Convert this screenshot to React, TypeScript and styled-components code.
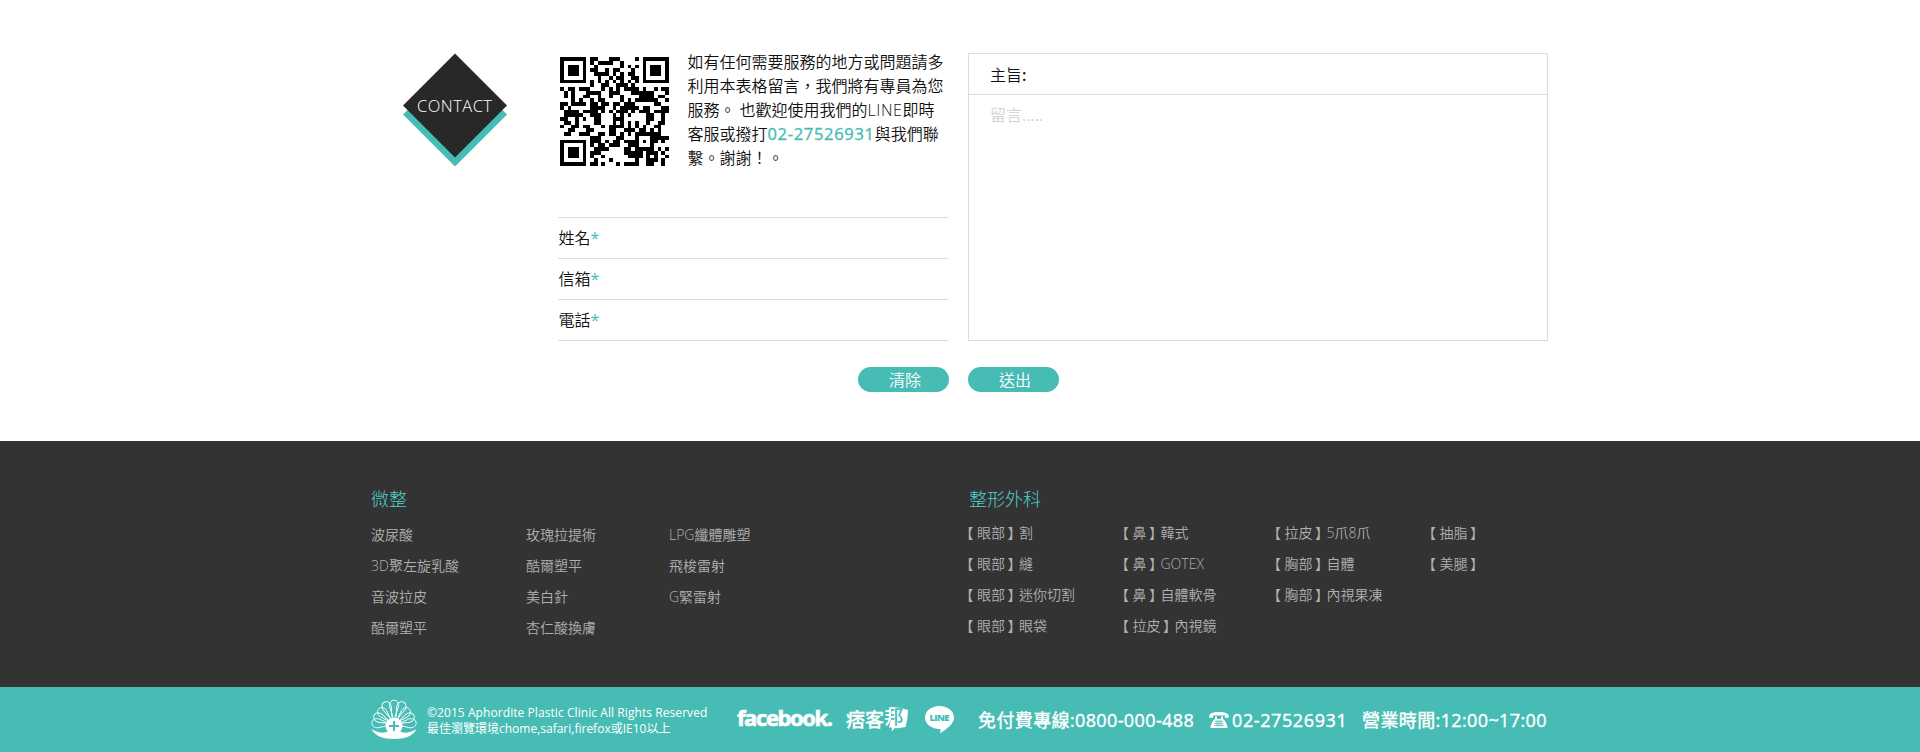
import React from "react";
import styled, { createGlobalStyle } from "styled-components";

const TEAL = "#47bcb5";
const DARK = "#333333";
const INK = "#101010";
const LINE = "#dcdcdc";

const GlobalStyle = createGlobalStyle`
  * { box-sizing: border-box; }
  body {
    margin: 0;
    background: #fff;
    color: ${INK};
    font-family: "Open Sans", "Noto Sans CJK TC", sans-serif;
    font-weight: 350;
  }
  ul { list-style: none; margin: 0; padding: 0; }
  h3, p { margin: 0; }
`;

/* ---------- QR code (version 3, level M, mask 3) ---------- */

const SIZE = 29;
const DATA_WORDS = 44;
const ECC_WORDS = 26;
const EXP: number[] = new Array(256).fill(0);
const LOG: number[] = new Array(256).fill(0);
for (let i = 0, v = 1; i < 255; i++) {
  EXP[i] = v;
  LOG[v] = i;
  v <<= 1;
  if (v & 256) v ^= 0x11d;
}
const mul = (a: number, b: number) => (a && b ? EXP[(LOG[a] + LOG[b]) % 255] : 0);

function eccWords(data: number[]): number[] {
  let gen = [1];
  for (let i = 0; i < ECC_WORDS; i++) {
    const next = new Array(gen.length + 1).fill(0);
    gen.forEach((c, k) => {
      next[k] ^= c;
      next[k + 1] ^= mul(c, EXP[i]);
    });
    gen = next;
  }
  const rest = [...data, ...new Array(ECC_WORDS).fill(0)];
  for (let i = 0; i < data.length; i++) {
    const f = rest[i];
    if (f) gen.forEach((c, k) => { rest[i + k] ^= mul(c, f); });
  }
  return rest.slice(data.length);
}

function qrMatrix(text: string): number[][] {
  const byte = (n: number) => n.toString(2).padStart(8, "0");
  let bits = "0100" + byte(text.length);
  for (const c of text) bits += byte(c.charCodeAt(0));
  bits += "0000";
  const data: number[] = [];
  for (let i = 0; i < bits.length; i += 8) data.push(parseInt(bits.slice(i, i + 8), 2));
  for (let p = 0; data.length < DATA_WORDS; p++) data.push(p % 2 ? 0x11 : 0xec);
  const stream = [...data, ...eccWords(data)].map(byte).join("");

  const m: number[][] = Array.from({ length: SIZE }, () => new Array(SIZE).fill(-1));
  const finder = (r: number, c: number) => {
    for (let i = -1; i < 8; i++)
      for (let j = -1; j < 8; j++) {
        const y = r + i;
        const x = c + j;
        if (y < 0 || x < 0 || y >= SIZE || x >= SIZE) continue;
        const q = Math.max(Math.abs(i - 3), Math.abs(j - 3));
        m[y][x] = q === 3 || q < 2 ? 1 : 0;
      }
  };
  finder(0, 0);
  finder(0, 22);
  finder(22, 0);
  for (let i = -2; i < 3; i++)
    for (let j = -2; j < 3; j++) m[22 + i][22 + j] = Math.max(Math.abs(i), Math.abs(j)) === 1 ? 0 : 1;
  for (let i = 8; i < 21; i++) m[6][i] = m[i][6] = (i + 1) % 2;

  const format = 0b101101101001011;
  const bit = (i: number) => (format >> i) & 1;
  for (let i = 0; i < 6; i++) m[i][8] = bit(i);
  m[7][8] = bit(6);
  m[8][8] = bit(7);
  m[8][7] = bit(8);
  for (let i = 9; i < 15; i++) m[8][14 - i] = bit(i);
  for (let i = 0; i < 8; i++) m[8][28 - i] = bit(i);
  for (let i = 8; i < 15; i++) m[14 + i][8] = bit(i);
  m[21][8] = 1;

  let k = 0;
  for (let right = 28; right >= 1; right -= 2) {
    if (right === 6) right = 5;
    const up = ((right + 1) & 2) === 0;
    for (let t = 0; t < SIZE; t++)
      for (let j = 0; j < 2; j++) {
        const x = right - j;
        const y = up ? 28 - t : t;
        if (m[y][x] !== -1) continue;
        const raw = k < stream.length ? +stream[k] : 0;
        k++;
        m[y][x] = (x + y) % 3 === 0 ? raw ^ 1 : raw;
      }
  }
  return m;
}

const QrSvg = styled.svg`
  display: block;
  width: 109px;
  height: 109px;
  margin: 4px 0 0 2px;
`;

function QrCode({ text }: { text: string }) {
  const d = qrMatrix(text)
    .flatMap((row, y) => row.map((on, x) => (on ? `M${x} ${y}h1v1h-1z` : "")))
    .join("");
  return (
    <QrSvg viewBox="0 0 29 29" shapeRendering="crispEdges">
      <path d={d} fill="#000" />
    </QrSvg>
  );
}

/* ---------- Contact form ---------- */

const Contact = styled.section`
  height: 441px;
  padding: 53px 372px 0 403px;
`;
const Columns = styled.div`
  display: flex;
  height: 288px;
`;
const Badge = styled.div`
  width: 155px;
  svg { display: block; }
`;
const Left = styled.div`
  width: 390px;
  display: flex;
  flex-direction: column;
  justify-content: space-between;
`;
const Intro = styled.div`
  display: flex;
  gap: 18.4px;
`;
const IntroText = styled.p`
  width: 260px;
  margin-top: -3px;
  font-size: 16px;
  line-height: 24px;
  white-space: nowrap;
`;
const Phone = styled.b`
  color: ${TEAL};
  font-weight: 400;
  font-size: 16.5px;
  letter-spacing: 0.7px;
  -webkit-text-stroke: 0.35px ${TEAL};
`;
const Latin = styled.span`
  letter-spacing: 0.55px;
`;
const Mark = styled.span`
  font-weight: 400;
`;
const Fields = styled.div`
  border-top: 1px solid ${LINE};
`;
const Field = styled.div`
  height: 41px;
  padding-left: 0.5px;
  border-bottom: 1px solid ${LINE};
  font-size: 16px;
  line-height: 40px;
  ${Mark} { color: ${TEAL}; }
`;
const Message = styled.div`
  width: 580px;
  margin-left: 20px;
  border: 1px solid ${LINE};
`;
const Subject = styled.div`
  height: 41px;
  padding-left: 21px;
  border-bottom: 1px solid ${LINE};
  font-size: 16px;
  line-height: 42px;
  ${Mark} { font-weight: 600; }
`;
const Placeholder = styled.div`
  padding-left: 21px;
  font-size: 16px;
  line-height: 40px;
  color: #d4d4d4;
`;
const Buttons = styled.div`
  display: flex;
  gap: 19px;
  margin: 26px 0 0 455px;
`;
const Button = styled.button`
  width: 91px;
  height: 25px;
  padding: 0 0 0 3px;
  border: 0;
  border-radius: 13px;
  background: ${TEAL};
  color: #fff;
  font: inherit;
  font-size: 16px;
  line-height: 24px;
`;

/* ---------- Links ---------- */

const Links = styled.section`
  display: flex;
  height: 246px;
  padding: 46px 0 0 371px;
  background: ${DARK};
  color: #b0b0b0;
`;
const Group = styled.div<{ $width: number }>`
  width: ${(p) => p.$width}px;
`;
const Heading = styled.h3<{ $indent?: number }>`
  margin-left: ${(p) => p.$indent ?? 0}px;
  height: 25px;
  font-size: 18px;
  font-weight: 300;
  line-height: 25px;
  color: #4fd0c8;
`;
const Lists = styled.div<{ $top: number }>`
  display: flex;
  margin-top: ${(p) => p.$top}px;
`;
const List = styled.ul<{ $width: number }>`
  width: ${(p) => p.$width}px;
  li {
    height: 31px;
    font-size: 14px;
    line-height: 31px;
    white-space: nowrap;
  }
`;
const Bracket = styled.span<{ $shift: number }>`
  margin: 0 ${(p) => -p.$shift}px 0 ${(p) => p.$shift}px;
`;

/* ---------- Bottom bar ---------- */

const Bar = styled.footer`
  display: flex;
  align-items: center;
  height: 65px;
  padding-left: 371px;
  background: ${TEAL};
  color: #fff;
  svg { display: block; flex: none; overflow: visible; }
`;
const Copyright = styled.div`
  width: 310px;
  margin-left: 10px;
  padding-top: 2px;
  font-size: 12px;
  font-weight: 400;
  line-height: 16px;
  white-space: nowrap;
`;
const Stretch = styled.span`
  letter-spacing: 0.07px;
`;
const Fb = styled.div`
  width: 109px;
  font: 700 22px/26px "Open Sans", sans-serif;
  letter-spacing: -1.4px;
  -webkit-text-stroke: 0.6px #fff;
  padding-bottom: 5px;
`;
const Pixnet = styled.div`
  display: flex;
  align-items: center;
  width: 79px;
  font-size: 19px;
  font-weight: 500;
  line-height: 22px;
  -webkit-text-stroke: 0.3px #fff;
  svg { -webkit-text-stroke: 0; }
`;
const Info = styled.div<{ $width: number; $space: number }>`
  width: ${(p) => p.$width}px;
  font-size: 18px;
  font-weight: 400;
  letter-spacing: ${(p) => p.$space}px;
  line-height: 24px;
  white-space: nowrap;
  -webkit-text-stroke: 0.4px #fff;
`;

function Shell() {
  const petals = [-84, -64, -43, -22, 0, 22, 43, 64, 84];
  return (
    <svg width="46" height="42" viewBox="0 0 46 42">
      <g fill="none" stroke="#fff" strokeWidth="0.9">
        {petals.map((a) => (
          <path
            key={a}
            transform={`rotate(${a} 23 26) translate(0 ${Math.abs(a) > 30 ? 2.6 : 0})`}
            d="M22 18 L18.6 8 C17.8 4 20 1.2 23 1.2 S28.2 4 27.4 8 L24 18"
          />
        ))}
      </g>
      <path d="M0.5 30 C7 34 13 34.500 17 32.500 H29 C33 34.500 39 34 45.500 30 C42 37 34 40 23 40 S4 37 0.500 30z" fill="#fff" />
      <circle cx="23" cy="27" r="8.500" fill="#fff" />
      <path d="M23 22v10M18 27h10" stroke={TEAL} strokeWidth="2" />
    </svg>
  );
}

function PixnetMark() {
  const glyph = { x: 0, y: 18, fontFamily: "Noto Sans CJK TC", fontSize: 19.5, fontWeight: 500 };
  const bubble = "M7 1 Q16 1 24 4 Q24 13 21.500 21 Q15 22.500 11 22 L7.500 25.500 8 21.500 5 21.500 Q8 12 7 1z";
  return (
    <svg width="26" height="33" viewBox="0 -3 26 33">
      <linearGradient id="split" gradientUnits="userSpaceOnUse" x1="0" y1="0" x2="26" y2="0">
        <stop offset="0.27" stopColor="#fff" />
        <stop offset="0.27" stopColor={TEAL} />
      </linearGradient>
      <path d={bubble} fill="#fff" />
      <text {...glyph} fill="url(#split)">邦</text>
    </svg>
  );
}

function Tagged({ tag, children }: { tag: string; children?: React.ReactNode }) {
  return (
    <li>
      <Bracket $shift={-3.5}>【</Bracket>
      {tag}
      <Bracket $shift={2.5}>】</Bracket>
      {children}
    </li>
  );
}

export default function App() {
  return (
    <>
      <GlobalStyle />
      <Contact>
        <Columns>
          <Badge>
            <svg width="104" height="114" viewBox="0 0 104 114">
              <path d="M0 61.5 52 9.5 104 61.5 52 113.5z" fill={TEAL} />
              <path d="M0 52.5 52 0.5 104 52.5 52 104.5z" fill="#282828" />
              <text
                x="51.500"
                y="59"
                fill="#fff"
                textAnchor="middle"
                textLength="75"
                fontFamily="Open Sans"
                fontWeight="300"
                fontSize="16.5"
              >
                CONTACT
              </text>
            </svg>
          </Badge>
          <Left>
            <Intro>
              <QrCode text="http://line.me/ti/p/woSXs21U5K" />
              <IntroText>
                如有任何需要服務的地方或問題請多
                <br />
                利用本表格留言，我們將有專員為您
                <br />
                服務。 也歡迎使用我們的<Latin>LINE</Latin>即時
                <br />
                客服或撥打<Phone>02-27526931</Phone>與我們聯
                <br />
                繫。謝謝！。
              </IntroText>
            </Intro>
            <Fields>
              {["姓名", "信箱", "電話"].map((t) => (
                <Field key={t}>
                  {t}
                  <Mark>*</Mark>
                </Field>
              ))}
            </Fields>
          </Left>
          <Message>
            <Subject>主旨<Mark>:</Mark></Subject>
            <Placeholder>留言<Mark>.....</Mark></Placeholder>
          </Message>
        </Columns>
        <Buttons>
          <Button>清除</Button>
          <Button>送出</Button>
        </Buttons>
      </Contact>

      <Links>
        <Group $width={592}>
          <Heading>微整</Heading>
          <Lists $top={7}>
            <List $width={155}>
              {["波尿酸", "3D聚左旋乳酸", "音波拉皮", "酷爾塑平"].map((t) => <li key={t}>{t}</li>)}
            </List>
            <List $width={143}>
              {["玫瑰拉提術", "酷爾塑平", "美白針", "杏仁酸換膚"].map((t) => <li key={t}>{t}</li>)}
            </List>
            <List $width={150}>
              {["LPG纖體雕塑", "飛梭雷射", "G緊雷射"].map((t) => <li key={t}>{t}</li>)}
            </List>
          </Lists>
        </Group>
        <Group $width={600}>
          <Heading $indent={6}>整形外科</Heading>
          <Lists $top={5}>
            <List $width={155.5}>
              {["割", "縫", "迷你切割", "眼袋"].map((t) => <Tagged key={t} tag="眼部">{t}</Tagged>)}
            </List>
            <List $width={152}>
              <Tagged tag="鼻">韓式</Tagged>
              <Tagged tag="鼻">GOTEX</Tagged>
              <Tagged tag="鼻">自體軟骨</Tagged>
              <Tagged tag="拉皮">內視鏡</Tagged>
            </List>
            <List $width={155}>
              <Tagged tag="拉皮">5爪8爪</Tagged>
              <Tagged tag="胸部">自體</Tagged>
              <Tagged tag="胸部">內視果凍</Tagged>
            </List>
            <List $width={100}>
              <Tagged tag="抽脂" />
              <Tagged tag="美腿" />
            </List>
          </Lists>
        </Group>
      </Links>

      <Bar>
        <Shell />
        <Copyright>
          <Stretch>©2015 Aphordite Plastic Clinic All Rights Reserved</Stretch>
          <br />
          最佳瀏覽環境chome,safari,firefox或IE10以上
        </Copyright>
        <Fb>facebook.</Fb>
        <Pixnet>
          痞客
          <PixnetMark />
        </Pixnet>
        <svg width="53" height="30" viewBox="0 0 53 30">
          <path d="M14.5 1C22.5 1 29 6 29 12.500c0 6-6.500 11-14 16 .8-2.500.6-3.800 0-4.400C6.500 24 0 19 0 12.500S6.500 1 14.500 1z" fill="#fff" />
          <text x="14.500" y="16" textAnchor="middle" textLength="20" fontFamily="Open Sans" fontWeight="800" fontSize="9.500" fill={TEAL}>
            LINE
          </text>
        </svg>
        <Info $width={231} $space={0.38}>免付費專線:0800-000-488</Info>
        <svg width="23" height="18" viewBox="0 0 23 18">
          <path
            d="M0 6.500C0 2.500 3 1 10 1s10 1.500 10 5.500l-4 .5V4.600H4V7z M6 5.500h2V8h4V5.500h2V8c2 1 4.500 6 4.500 9h-17C1.500 14 4 9 6 8z"
            fill="#fff"
          />
          <path d="M6 10.500h8M5.500 12.500h9M5 14.500h10M8 9v6.500M10 9v6.500M12 9v6.500" stroke={TEAL} strokeWidth=".7" />
        </svg>
        <Info $width={130} $space={0.6}>02-27526931</Info>
        <Info $width={190} $space={0.38}>營業時間:12:00~17:00</Info>
      </Bar>
    </>
  );
}
